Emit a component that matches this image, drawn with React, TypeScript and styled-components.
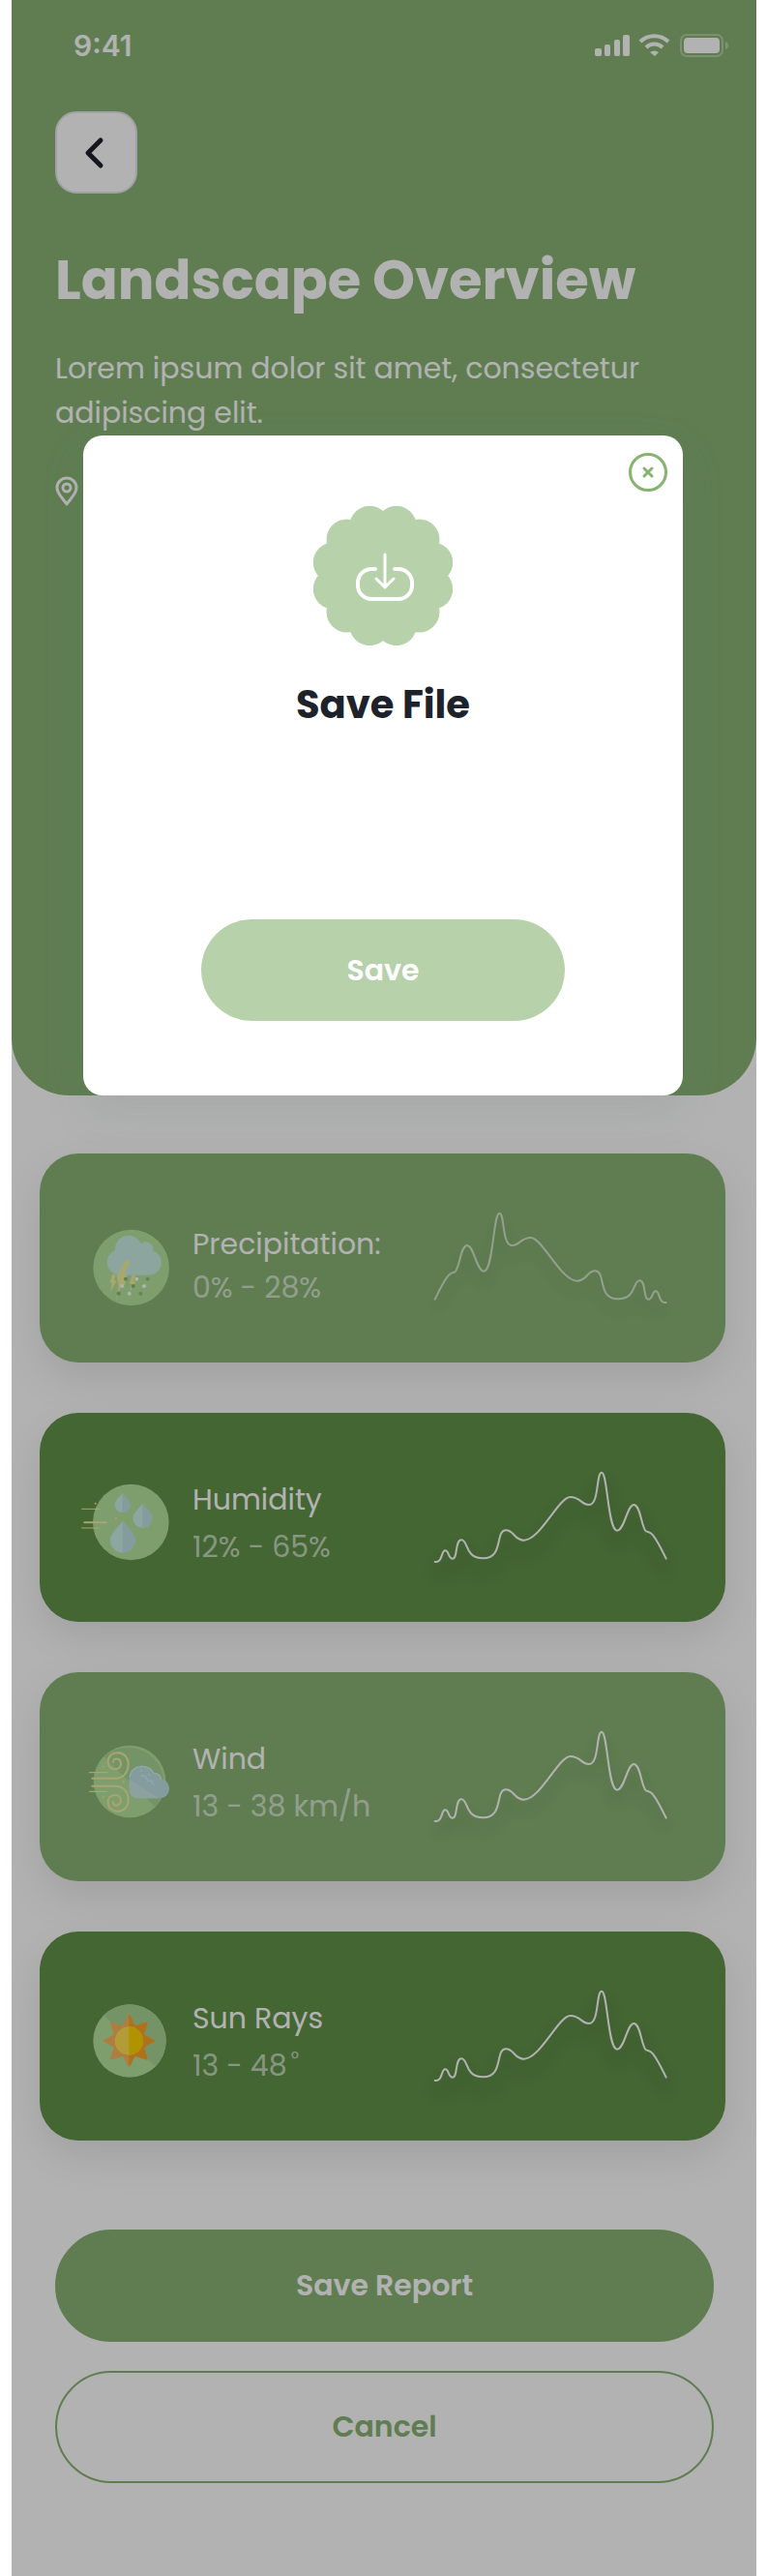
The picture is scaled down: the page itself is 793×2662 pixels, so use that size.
import React from "react";
import styled, { createGlobalStyle } from "styled-components";

const color = {
  leaf: "#89b474",
  forest: "#619249",
  mint: "#b7d1aa",
  accent: "#86b370",
  ink: "#1e222b",
};

const GlobalStyle = createGlobalStyle`
  *, *::before, *::after { box-sizing: border-box; }
  body {
    margin: 0;
    background: #fff;
    font-family: Poppins, Inter, "Open Sans", sans-serif;
  }
  h1, h2, p, dl, dt, dd { margin: 0; }
`;

const Screen = styled.div`
  position: relative;
  margin: 0 11px 0 12px;
  background: #fff;
`;

const Header = styled.header`
  min-height: 1132px;
  padding-top: 28px;
  background: ${color.leaf};
  border-radius: 0 0 60px 60px;
  color: #fff;
`;

const StatusBar = styled.div`
  display: flex;
  align-items: center;
  justify-content: space-between;
  height: 38px;
  padding: 0 28px 0 64px;
  font-family: Inter, "Liberation Sans", sans-serif;
  font-size: 30px;
  font-weight: 600;
`;

const StatusIcons = styled.svg`
  display: block;
  width: 140px;
  height: 24px;
`;

const Intro = styled.div`
  display: flex;
  flex-direction: column;
  align-items: flex-start;
  padding: 49px 44px 0 45px;
`;

const BackButton = styled.button`
  display: grid;
  place-items: center;
  width: 85px;
  height: 85px;
  padding: 0;
  border: 2px solid #e5e7ee;
  border-radius: 22px;
  background: #fff;
  color: ${color.ink};
`;

const Title = styled.h1`
  margin-top: 48px;
  font-size: 56px;
  font-weight: 700;
  line-height: 84px;
`;

const Lead = styled.p`
  margin-top: 26px;
  font-size: 30px;
  line-height: 46px;
`;

const Pin = styled.svg`
  display: block;
  width: 24px;
  height: 32px;
  margin-top: 42px;
`;

const Cards = styled.main`
  display: flex;
  flex-direction: column;
  gap: 52px;
  padding: 60px 32px 0 29px;
`;

const Card = styled.section<{ $dark?: boolean }>`
  display: grid;
  grid-template-columns: 80px 1fr 240px;
  column-gap: 23px;
  align-items: start;
  padding: 60px 61px 52px 55px;
  border-radius: 40px;
  background: ${(p) => (p.$dark ? color.forest : color.leaf)};
  box-shadow: 0 16px 44px rgba(0, 0, 0, 0.1);
`;

const IconSlot = styled.div<{ $low?: boolean }>`
  margin-top: ${(p) => (p.$low ? 18 : 13)}px;
`;

const IconArt = styled.svg`
  display: block;
  width: 80px;
  height: 80px;
  overflow: visible;
`;

const Reading = styled.dl<{ $low?: boolean }>`
  margin-top: ${(p) => (p.$low ? 11 : 5)}px;
  font-size: 30px;
  line-height: ${(p) => (p.$low ? 45 : 49)}px;
  white-space: nowrap;
  color: #fff;
`;

const Value = styled.dd`
  color: rgba(255, 255, 255, 0.65);
`;

const Degree = styled.sup`
  margin-left: 4px;
  font-size: 20px;
  line-height: 1;
`;

const Chart = styled.svg`
  display: block;
  width: 240px;
  height: 104px;
  overflow: visible;
  filter: drop-shadow(0 12px 8px rgba(0, 0, 0, 0.25));
`;

const Actions = styled.footer`
  display: flex;
  flex-direction: column;
  gap: 30px;
  padding: 92px 44px 96px 45px;
`;

const PillButton = styled.button<{ $outline?: boolean }>`
  height: 116px;
  border: 2px solid ${color.leaf};
  border-radius: 58px;
  background: ${(p) => (p.$outline ? "transparent" : color.leaf)};
  color: ${(p) => (p.$outline ? color.leaf : "#fff")};
  font-family: inherit;
  font-size: 30px;
  font-weight: 600;
`;

const Overlay = styled.div`
  position: absolute;
  inset: 0;
  display: flex;
  justify-content: center;
  align-items: flex-start;
  padding: 450px 76px 0 74px;
  background: rgba(0, 0, 0, 0.3);
`;

const Dialog = styled.div`
  position: relative;
  display: flex;
  flex-direction: column;
  align-items: center;
  width: 100%;
  max-width: 620px;
  min-height: 682px;
  padding: 73px 40px 77px;
  border-radius: 20px;
  background: #fff;
  box-shadow: 0 16px 44px rgba(100, 130, 115, 0.16);
`;

const CloseButton = styled.button`
  position: absolute;
  top: 18px;
  right: 16px;
  display: grid;
  place-items: center;
  width: 40px;
  height: 40px;
  padding: 0;
  border: 3px solid ${color.accent};
  border-radius: 50%;
  background: none;
  color: ${color.accent};
`;

const Badge = styled.svg`
  display: block;
  width: 144px;
  height: 144px;
`;

const DialogTitle = styled.h2`
  margin-top: 31px;
  font-size: 40px;
  font-weight: 700;
  line-height: 60px;
  color: ${color.ink};
`;

const SaveButton = styled.button`
  width: 376px;
  max-width: 100%;
  height: 105px;
  margin-top: auto;
  border: 0;
  border-radius: 53px;
  background: ${color.mint};
  color: #fff;
  font-family: inherit;
  font-size: 30px;
  font-weight: 600;
`;

const TREND =
  "M59 338C70 315 88 280 100 265C108 254 115 256 121 253C135 245 138 171 159 171C180 171 188 251 211 251C240 251 240 71 259 71C276 71 266 171 298 171C322 171 325 147 356 147C392 147 450 281 500 281C530 281 530 250 556 250C590 250 562 337 626 337C685 337 672 280 694 280C714 280 705 338 721 338C735 338 732 313 744 313C757 313 752 352 776 348";

function TrendLine({ falling }: { falling?: boolean }) {
  return (
    <Chart viewBox="57 66 720 312" fill="none" aria-hidden="true">
      <path
        d={TREND}
        transform={falling ? undefined : "translate(835 0) scale(-1 1)"}
        stroke="#fff"
        strokeOpacity={falling ? 0.65 : 1}
        strokeWidth="6"
        strokeLinecap="round"
      />
    </Chart>
  );
}

function RainIcon() {
  const dots: [number, number, string][] = [
    [150, 244, color.leaf], [184, 244, "#fff"], [218, 244, "#93bd80"],
    [139, 266, "#fff"], [173, 266, color.leaf], [207, 266, "#fff"],
    [128, 289, color.leaf], [161, 289, "#fff"], [196, 289, "#93bd80"],
  ];
  return (
    <IconArt viewBox="48 89 240 240" aria-hidden="true">
      <circle cx="167" cy="209" r="118" fill="#b5e29c" />
      <path
        d="M128 232A40 40 0 0 1 117 155A42 42 0 0 1 197 134A23 23 0 0 1 234 156A39 39 0 0 1 220 232Z"
        fill="#c9eee4"
      />
      <path
        d="M152 183L164 189L146 229L155 232L147 262L136 262L120 310L128 266L122 236Z M108 229L119 232L114 247L121 250L102 285L107 258L101 254Z M170 232L180 232L174 250L181 252L163 284L168 260L161 258Z"
        fill="#f0f09e"
      />
      {dots.map(([x, y, fill]) => (
        <circle key={`${x}-${y}`} cx={x} cy={y} r="6" fill={fill} />
      ))}
    </IconArt>
  );
}

function HumidityIcon() {
  return (
    <IconArt viewBox="77 109 240 240" aria-hidden="true">
      <circle cx="195" cy="229" r="118" fill="#b5e29c" />
      <g fill="#c9eee8">
        <path d="M169 138C162 150 145 160 145 176A24 23 0 0 0 193 176C193 160 176 150 169 138Z" />
        <path d="M231 171C222 186 201 198 201 217A30 30 0 0 0 261 217C261 198 240 186 231 171Z" />
        <path d="M169 225C158 244 131 260 131 285A38 38 0 0 0 208 285C208 260 180 244 169 225Z" />
      </g>
      <g fill="#bee0e3">
        <path d="M169 138C176 150 193 160 193 176A24 23 0 0 1 169 199Z" />
        <path d="M231 171C240 186 261 198 261 217A30 30 0 0 1 231 247Z" />
        <path d="M169 225C180 244 208 260 208 285A38 38 0 0 1 169 323Z" />
      </g>
      <g stroke="#f4ec9e" strokeLinecap="round">
        <path d="M43 188H98M43 247H98" strokeWidth="3" />
        <path d="M51 230H119" strokeWidth="6" />
      </g>
      <g fill="#f4ec9e">
        <circle cx="85" cy="171" r="3" />
        <circle cx="149" cy="218" r="3" />
        <circle cx="85" cy="265" r="2" />
      </g>
    </IconArt>
  );
}

function WindIcon() {
  return (
    <IconArt viewBox="48 94 240 240" aria-hidden="true">
      <circle cx="162" cy="214" r="112" fill="#b5e29c" />
      <path d="M82 136A112 112 0 0 1 241 293Z" fill="#a6d595" />
      <g fill="none" stroke="#f4eca0" strokeLinecap="round">
        <g strokeWidth="6">
          <path d="M46 204H118C142 204 158 186 158 160C158 139 144 125 125 125C107 125 95 136 95 153C95 167 104 176 117 176C128 176 135 168 135 158C135 148 127 143 119 144C113 145 110 150 111 154" />
          <path d="M46 228H118C142 228 158 246 158 271C158 292 144 306 125 306C107 306 95 295 95 278C95 265 104 256 117 256C128 256 135 264 135 273C135 283 127 289 119 288C113 287 110 282 111 277" />
        </g>
        <path d="M38 186H92M38 245H92" strokeWidth="4" />
      </g>
      <g fill="#f4eca0">
        <circle cx="80" cy="168" r="3" />
        <circle cx="80" cy="263" r="3" />
        <circle cx="143" cy="215" r="3" />
      </g>
      <path
        d="M190 266C172 266 161 256 161 238V205C161 181 179 165 201 165C219 165 232 174 238 187C251 186 261 195 262 207C276 209 285 221 285 236C285 254 272 266 255 266Z"
        fill="#bee0e3"
      />
      <path d="M161 207L253 266H190C172 266 161 256 161 238Z" fill="#c9e8e4" />
      <path
        d="M163 200C165 180 181 167 201 167C218 167 230 175 237 189C250 188 259 196 260 209"
        fill="none"
        stroke="#d4f0f3"
        strokeWidth="4"
      />
      <path
        d="M198 196C208 195 216 202 218 211C227 210 235 216 236 224"
        fill="none"
        stroke="#d4f0f3"
        strokeWidth="4"
        strokeLinecap="round"
      />
      <circle cx="198" cy="180" r="3" fill="#d4f0f3" />
      <circle cx="223" cy="194" r="3" fill="#d4f0f3" />
    </IconArt>
  );
}

function SunIcon() {
  return (
    <IconArt viewBox="48 87 240 240" aria-hidden="true">
      <circle cx="162" cy="207" r="113" fill="#b5e29c" />
      <path d="M82 127A113 113 0 0 1 242 287Z" fill="#a6d595" />
      <path
        d="M160 127L177 164L215 151L203 189L237 207L203 225L215 263L177 251L160 285L143 251L105 263L117 225L84 207L117 189L105 151L143 164Z"
        fill="#fbb45b"
        stroke="#fbb45b"
        strokeWidth="6"
        strokeLinejoin="round"
      />
      <path
        d="M160 127L177 164L215 151L203 189L237 207L203 225L215 263L177 251L160 285Z"
        fill="#fba424"
      />
      <path
        d="M161 129L177 164L215 151L203 189L237 207L203 225L215 263L177 251L161 283"
        fill="none"
        stroke="#fba424"
        strokeWidth="6"
        strokeLinejoin="round"
      />
      <circle cx="160" cy="207" r="44" fill="#fee050" />
      <path d="M160 163A44 44 0 0 1 160 251Z" fill="#fed300" />
    </IconArt>
  );
}

function DownloadBadge() {
  return (
    <Badge viewBox="0 0 144 144" aria-hidden="true">
      <g fill={color.mint}>
        <circle cx="72" cy="72" r="60" />
        {Array.from({ length: 12 }, (_, i) => {
          const angle = ((i * 30 + 15) * Math.PI) / 180;
          return (
            <circle
              key={i}
              cx={72 + 53 * Math.cos(angle)}
              cy={72 + 53 * Math.sin(angle)}
              r="21"
            />
          );
        })}
      </g>
      <g fill="none" stroke="#fff" strokeLinecap="round" strokeLinejoin="round">
        <path
          d="M64 65H60A14 14 0 0 0 46 79V82A14 14 0 0 0 60 96H88A14 14 0 0 0 102 82V79A14 14 0 0 0 88 65H84"
          strokeWidth="4"
        />
        <path d="M74 50V84M65 75L74 84L83 75" strokeWidth="3" />
      </g>
    </Badge>
  );
}

const readings = [
  { label: "Precipitation:", value: "0% - 28%", Icon: RainIcon, low: true },
  { label: "Humidity", value: "12% - 65%", Icon: HumidityIcon, dark: true },
  { label: "Wind", value: "13 - 38 km/h", Icon: WindIcon },
  { label: "Sun Rays", value: "13 - 48", degree: true, Icon: SunIcon, dark: true },
];

export default function App() {
  return (
    <>
      <GlobalStyle />
      <Screen>
        <Header>
          <StatusBar>
            <span>9:41</span>
            <StatusIcons viewBox="0 0 140 24" fill="#fff" aria-hidden="true">
              <rect x="1" y="15" width="7" height="8" rx="2" />
              <rect x="11" y="11" width="6" height="12" rx="2" />
              <rect x="21" y="6" width="6" height="17" rx="2" />
              <rect x="30" y="1" width="7" height="22" rx="2" />
              <g fill="none" stroke="#fff" strokeWidth="4">
                <path d="M48 8A21 21 0 0 1 77 8" />
                <path d="M54 14A12 12 0 0 1 71 14" />
              </g>
              <path d="M58 19A8 8 0 0 1 67 19L63 23Z" />
              <rect x="90" y="1" width="43" height="22" rx="6" fill="none" stroke="#fff" strokeOpacity="0.350" strokeWidth="2" />
              <rect x="93" y="4" width="37" height="16" rx="4" />
              <path d="M136 8V16Q139 15 139 12Q139 9 136 8Z" opacity="0.400" />
            </StatusIcons>
          </StatusBar>
          <Intro>
            <BackButton aria-label="Back">
              <svg width="32" height="40" viewBox="0 0 32 40" fill="none" aria-hidden="true">
                <path d="M20 7L7 20L20 33" stroke="currentColor" strokeWidth="5" strokeLinecap="round" strokeLinejoin="round" />
              </svg>
            </BackButton>
            <Title>Landscape Overview</Title>
            <Lead>Lorem ipsum dolor sit amet, consectetur adipiscing elit.</Lead>
            <Pin viewBox="0 0 24 32" fill="none" stroke="#fff" strokeWidth="3" aria-hidden="true">
              <path d="M12 29C9 24 2 19 2 12A10 10 0 0 1 22 12C22 19 15 24 12 29Z" strokeLinejoin="round" />
              <circle cx="12" cy="12" r="4" />
            </Pin>
          </Intro>
        </Header>

        <Cards>
          {readings.map(({ label, value, degree, Icon, dark, low }) => (
            <Card key={label} $dark={dark}>
              <IconSlot $low={low}>
                <Icon />
              </IconSlot>
              <Reading $low={low}>
                <dt>{label}</dt>
                <Value>
                  {value}
                  {degree && <Degree>°</Degree>}
                </Value>
              </Reading>
              <TrendLine falling={low} />
            </Card>
          ))}
        </Cards>

        <Actions>
          <PillButton>Save Report</PillButton>
          <PillButton $outline>Cancel</PillButton>
        </Actions>

        <Overlay>
          <Dialog role="dialog" aria-modal="true" aria-labelledby="save-file-title">
            <CloseButton aria-label="Close">
              <svg width="14" height="14" viewBox="0 0 14 14" aria-hidden="true">
                <path d="M3 3L11 11M11 3L3 11" stroke="currentColor" strokeWidth="3" strokeLinecap="round" />
              </svg>
            </CloseButton>
            <DownloadBadge />
            <DialogTitle id="save-file-title">Save File</DialogTitle>
            <SaveButton>Save</SaveButton>
          </Dialog>
        </Overlay>
      </Screen>
    </>
  );
}
